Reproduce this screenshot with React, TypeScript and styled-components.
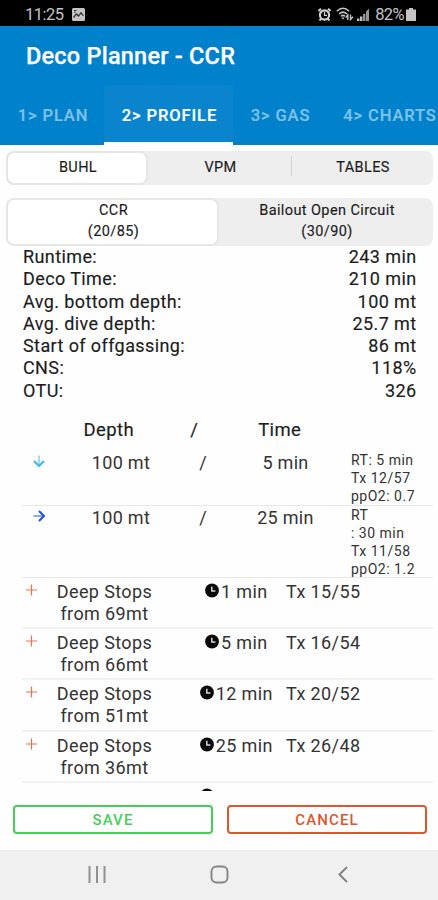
import React from "react";
import styled, { createGlobalStyle } from "styled-components";

const GlobalStyle = createGlobalStyle`
  * { box-sizing: border-box; }
  body {
    margin: 0;
    background: #fefefe;
    font-family: Roboto, "Liberation Sans", sans-serif;
    color: #1c1c1c;
  }
`;

const Screen = styled.div`
  width: 438px;
  height: 900px;
  display: flex;
  flex-direction: column;
  overflow: hidden;
  white-space: nowrap;
`;

const StatusBar = styled.div`
  height: 26px;
  flex: none;
  padding: 2px 22px 0 25px;
  background: #000;
  color: #c4c4c4;
  display: flex;
  align-items: center;
  font-size: 16.5px;
  letter-spacing: -0.5px;
`;

const StatusIcons = styled.div`
  margin-left: auto;
  display: flex;
  align-items: center;
`;

const Battery = styled.span`
  margin-left: 5px;
  letter-spacing: -0.6px;
`;

const StatusSvg = styled.svg<{ $gap?: number }>`
  display: block;
  margin-left: ${(p) => p.$gap ?? 0}px;
`;

const Header = styled.header`
  height: 119px;
  flex: none;
  background: #0081cb;
  display: flex;
  flex-direction: column;
`;

const Title = styled.h1`
  margin: 0;
  height: 59px;
  padding-left: 26px;
  line-height: 60px;
  font-size: 23.5px;
  font-weight: 500;
  letter-spacing: 0.22px;
  -webkit-text-stroke: 0.25px #fff;
  color: #fff;
`;

const Tabs = styled.nav`
  display: grid;
  grid-template-columns: 104px 129px 93px 126px;
  height: 60px;
`;

const Tab = styled.div<{ $active?: boolean }>`
  display: flex;
  align-items: center;
  justify-content: center;
  padding: 3px 0 0 2px;
  font-size: 16.5px;
  font-weight: 500;
  letter-spacing: 0.9px;
  color: ${(p) => (p.$active ? "#fff" : "#80c1e6")};
  -webkit-text-stroke: 0.2px currentColor;
  background: ${(p) => (p.$active ? "#0a85cd" : "transparent")};
  border-bottom: 3px solid ${(p) => (p.$active ? "#fff" : "transparent")};
`;

const Segmented = styled.div<{ $columns: string; $height: number; $top: number }>`
  flex: none;
  display: grid;
  grid-template-columns: ${(p) => p.$columns};
  grid-template-rows: 100%;
  height: ${(p) => p.$height}px;
  margin: ${(p) => p.$top}px 5px 0 6px;
  border-radius: 8px;
  background: #eee;
`;

const Segment = styled.div<{ $active?: boolean; $divided?: boolean; $shift?: number }>`
  position: relative;
  display: flex;
  align-items: center;
  justify-content: center;
  text-align: center;
  font-size: 14.5px;
  line-height: 21px;
  letter-spacing: 0.4px;
  -webkit-text-stroke: 0.15px #1c1c1c;
  padding-left: 2px;
  padding-bottom: ${(p) => p.$shift ?? 1}px;
  border-radius: 8px;
  border: ${(p) => (p.$active ? "2px solid #e6e6e6" : "0")};
  background: ${(p) => (p.$active ? "#fff" : "transparent")};
  &::before {
    content: "";
    display: ${(p) => (p.$divided ? "block" : "none")};
    position: absolute;
    left: 0;
    top: 5px;
    height: 20px;
    width: 1px;
    background: #d2d2d2;
  }
`;

const Stats = styled.dl`
  flex: none;
  margin: 0;
  padding: 0 21.5px 0 23px;
`;

const Stat = styled.div`
  display: flex;
  justify-content: space-between;
  height: 22.3px;
  line-height: 22.3px;
  font-size: 18px;
  letter-spacing: 0.4px;
  -webkit-text-stroke: 0.15px #1c1c1c;
  dd { margin: 0; letter-spacing: 0.4px; }
`;

const Columns = styled.div`
  flex: none;
  display: grid;
  grid-template-columns: repeat(3, 85.5px);
  padding-left: 66px;
  margin-top: 16px;
  height: 33px;
  line-height: 24px;
  text-align: center;
  font-size: 18.5px;
  letter-spacing: 0.4px;
  -webkit-text-stroke: 0.15px #1c1c1c;
`;

const List = styled.div`
  flex: none;
  height: 340px;
  overflow: hidden;
  padding: 0 5px 0 22px;
  color: #333;
  font-size: 18px;
  line-height: 22px;
`;

const LevelRow = styled.div<{ $height: number }>`
  display: grid;
  grid-template-columns: 34px 130px 34px 131px 1fr;
  height: ${(p) => p.$height}px;
  border-bottom: 1.5px solid #e8e8e8;
  text-align: center;
  letter-spacing: 0.3px;
  > span { padding-top: 1px; }
`;

const LevelIcon = styled.div`
  padding-top: 3px;
  svg { display: block; margin: 0 auto; }
`;

const Details = styled.div`
  text-align: left;
  font-size: 14px;
  line-height: 18px;
  letter-spacing: 0.5px;
`;

const StopRow = styled.div`
  display: grid;
  grid-template-columns: 18px 130px 93px 1fr;
  height: 51.2px;
  border-bottom: 2px solid #f2f2f2;
  padding-top: 3px;
  text-align: center;
  letter-spacing: 0.38px;
  > svg { display: block; margin: 3px 0 0 4px; }
`;

const StopTime = styled.div`
  display: flex;
  justify-content: center;
  align-items: flex-start;
  margin-left: 20px;
  margin-right: -20px;
  svg { margin: 2px 1.5px 0 0; }
`;

const Mix = styled.div`
  text-align: left;
  padding-left: 23px;
`;

const StopName = styled.div`
  padding-right: 1px;
`;

const NextRow = styled.div`
  padding: 5px 0 0 178px;
  svg { display: block; }
`;

const Actions = styled.div`
  flex: none;
  display: grid;
  grid-template-columns: 200px 200px;
  column-gap: 14px;
  padding: 14px 0 0 13px;
  height: 59px;
`;

const Action = styled.button<{ $color: string }>`
  height: 29px;
  padding: 0;
  background: #fff;
  border: 2px solid ${(p) => p.$color};
  border-radius: 4px;
  color: ${(p) => p.$color};
  font: 500 15px/24px Roboto, sans-serif;
  letter-spacing: 1.1px;
`;

const NavBar = styled.div`
  flex: 1;
  background: #f0f0f0;
  display: grid;
  grid-template-columns: repeat(3, 123px);
  justify-items: center;
  align-items: center;
  padding: 0 0 2px 35px;
`;

const ArrowIcon = ({ color, turn }: { color: string; turn: number }) => (
  <svg width="14" height="14" viewBox="0 0 14 14">
    <g transform={`rotate(${turn} 7 7)`} fill="none" stroke={color}>
      <path d="M1.5 7H12" strokeWidth="1.4" opacity="0.7" />
      <path d="M7 2l5 5-5 5" strokeWidth="2" />
    </g>
  </svg>
);

const PlusIcon = () => (
  <svg width="11" height="12" viewBox="0 0 11 12">
    <path d="M5.5 .5v11M0 6h11" stroke="#f0714a" strokeWidth="1.2" />
  </svg>
);

const ClockIcon = () => (
  <svg width="14" height="15" viewBox="0 0 14 15">
    <circle cx="7" cy="7.5" r="6.9" fill="#0a0a0a" />
    <path d="M6.8 3.8v4.2h3.6" fill="none" stroke="#d8d8d8" strokeWidth="1.5" />
  </svg>
);

const stats = [
  ["Runtime:", "243 min"],
  ["Deco Time:", "210 min"],
  ["Avg. bottom depth:", "100 mt"],
  ["Avg. dive depth:", "25.7 mt"],
  ["Start of offgassing:", "86 mt"],
  ["CNS:", "118%"],
  ["OTU:", "326"],
];

const levels = [
  { color: "#3db8ee", turn: 90, time: "5 min", height: 55, details: ["RT: 5 min", "Tx 12/57", "ppO2: 0.7"] },
  { color: "#1c4fe0", turn: 0, time: "25 min", height: 72, details: ["RT", ": 30 min", "Tx 11/58", "ppO2: 1.2"] },
];

const stops = [
  { depth: "69mt", time: "1 min", mix: "Tx 15/55" },
  { depth: "66mt", time: "5 min", mix: "Tx 16/54" },
  { depth: "51mt", time: "12 min", mix: "Tx 20/52" },
  { depth: "36mt", time: "25 min", mix: "Tx 26/48" },
];

export default function App() {
  return (
    <Screen>
      <GlobalStyle />
      <StatusBar>
        11:25
        <StatusSvg $gap={8} width="13" height="13" viewBox="0 0 13 13">
          <rect width="13" height="13" rx="1.5" fill="#c4c4c4" />
          <path d="M1.5 9.5L4.5 6l2 2L9 4.8l2.500 3" fill="none" stroke="#333" strokeWidth="1.2" />
          <path d="M2 2.5h2.5M2 4.2h1.5" stroke="#333" strokeWidth="1" />
        </StatusSvg>
        <StatusIcons>
          <StatusSvg width="13" height="13" viewBox="0 0 13 13">
            <circle cx="6.5" cy="7" r="4.6" fill="none" stroke="#d0d0d0" strokeWidth="2.2" />
            <path d="M.5 3L3 .8M12.5 3L10 .8M1.5 12.5l2-2M11.5 12.5L9.5 10.5" stroke="#d0d0d0" strokeWidth="2" />
            <path d="M6.5 4v3.3H9" fill="none" stroke="#d0d0d0" strokeWidth="1.2" />
          </StatusSvg>
          <StatusSvg $gap={5} width="18" height="14" viewBox="0 0 18 14">
            <g fill="none" stroke="#c4c4c4" strokeWidth="1.5">
              <path d="M.8 4.2Q7 -1.6 13.2 4.2M3 7Q7 3.2 11 7M5 9.3Q7 7.5 9 9.3" />
            </g>
            <path d="M7 12.5L5.3 10.4h3.4z" fill="#c4c4c4" />
            <path d="M11.8 13V8L9.8 10.5M14.5 7.5v5l2.5-2.7" fill="none" stroke="#c4c4c4" strokeWidth="1.4" />
          </StatusSvg>
          <StatusSvg $gap={3} width="13" height="13" viewBox="0 0 13 13">
            <path d="M0 13v-2.5h2.4V13zM3 13V8.5h2.4V13z" fill="#c4c4c4" />
            <path d="M6 13V6h2.4v7zM9 13V3.5l3-3V13z" fill="#949494" />
          </StatusSvg>
          <Battery>82%</Battery>
          <StatusSvg $gap={2} width="10" height="13" viewBox="0 0 10 13">
            <path d="M3 0h4v1.5h3V13H0V1.5h3z" fill="#c4c4c4" />
          </StatusSvg>
        </StatusIcons>
      </StatusBar>

      <Header>
        <Title>Deco Planner - CCR</Title>
        <Tabs>
          <Tab>1&gt; PLAN</Tab>
          <Tab $active>2&gt; PROFILE</Tab>
          <Tab>3&gt; GAS</Tab>
          <Tab>4&gt; CHARTS</Tab>
        </Tabs>
      </Header>

      <Segmented $columns="142px 143px 142px" $height={34} $top={6}>
        <Segment $active>BUHL</Segment>
        <Segment>VPM</Segment>
        <Segment $divided>TABLES</Segment>
      </Segmented>
      <Segmented $columns="213px 214px" $height={48} $top={13}>
        <Segment $active $shift={2}>CCR<br />(20/85)</Segment>
        <Segment $shift={3}>Bailout Open Circuit<br />(30/90)</Segment>
      </Segmented>

      <Stats>
        {stats.map(([label, value]) => (
          <Stat key={label}>
            <dt>{label}</dt>
            <dd>{value}</dd>
          </Stat>
        ))}
      </Stats>

      <Columns>
        <span>Depth</span>
        <span>/</span>
        <span>Time</span>
      </Columns>

      <List>
        {levels.map((l) => (
          <LevelRow key={l.time} $height={l.height}>
            <LevelIcon><ArrowIcon color={l.color} turn={l.turn} /></LevelIcon>
            <span>100 mt</span>
            <span>/</span>
            <span>{l.time}</span>
            <Details>
              {l.details.map((d) => <div key={d}>{d}</div>)}
            </Details>
          </LevelRow>
        ))}
        {stops.map((s) => (
          <StopRow key={s.depth}>
            <PlusIcon />
            <StopName>Deep Stops<br />from {s.depth}</StopName>
            <StopTime><ClockIcon />{s.time}</StopTime>
            <Mix>{s.mix}</Mix>
          </StopRow>
        ))}
        <NextRow><ClockIcon /></NextRow>
      </List>

      <Actions>
        <Action $color="#45cf57">SAVE</Action>
        <Action $color="#e0562c">CANCEL</Action>
      </Actions>

      <NavBar>
        <svg width="18" height="17" viewBox="0 0 18 17">
          <path d="M1.5 0v17M9 0v17M16.5 0v17" stroke="#909090" strokeWidth="2" />
        </svg>
        <svg width="19" height="19" viewBox="0 0 19 19">
          <rect x="1.5" y="1.5" width="16" height="16" rx="5" fill="none" stroke="#858585" strokeWidth="1.9" />
        </svg>
        <svg width="10" height="17" viewBox="0 0 10 17">
          <path d="M9 1L1.5 8.500 9 16" fill="none" stroke="#808080" strokeWidth="1.9" />
        </svg>
      </NavBar>
    </Screen>
  );
}
